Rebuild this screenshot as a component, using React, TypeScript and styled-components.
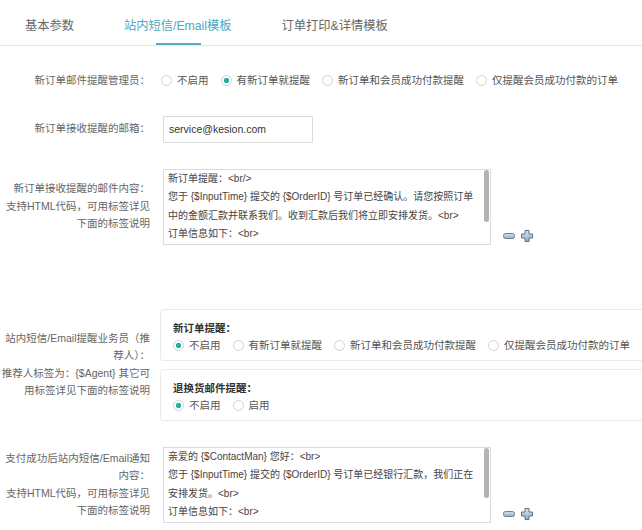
import styled, { createGlobalStyle } from 'styled-components';

const GlobalStyle = createGlobalStyle`
    html, body {
        margin: 0;
        padding: 0;
        background: #fff;
        overflow: hidden;
    }
    body {
        font-family: "Liberation Sans", "Noto Sans CJK SC", sans-serif;
        font-size: 10.5px;
        color: #666;
    }
`;

const StyledTabs = styled.div`
    display: flex;
    height: 45px;
    border-bottom: 1px solid #e6e6e6;
`;

const StyledTab = styled.div<{ $active?: boolean }>`
    position: relative;
    display: flex;
    align-items: center;
    padding: 4px 25px 0;
    font-size: 12.25px;
    color: ${(p) => (p.$active ? '#4ba6c1' : '#666')};
    &::after {
        content: '';
        display: ${(p) => (p.$active ? 'block' : 'none')};
        position: absolute;
        left: 50%;
        bottom: 0;
        width: 45px;
        height: 2px;
        margin-left: -22px;
        background: #5aacc6;
    }
`;

const StyledForm = styled.div`
    padding-top: 13px;
`;

const StyledRow = styled.div<{ $spaceAfter?: number }>`
    display: grid;
    grid-template-columns: 150px 1fr;
    column-gap: 10px;
    align-items: center;
    padding: 13px 0;
    margin-bottom: ${(p) => p.$spaceAfter || 0}px;
`;

const StyledLabel = styled.div`
    text-align: right;
    line-height: 17.5px;
    white-space: nowrap;
    color: #666;
`;

const StyledField = styled.div`
    display: flex;
    align-items: flex-end;
    min-width: 0;
`;

const StyledRadioGroup = styled.div<{ $indent?: number }>`
    display: flex;
    align-items: center;
    line-height: 17px;
    margin-left: ${(p) => p.$indent || 0}px;
    white-space: nowrap;
`;

const StyledRadioOption = styled.label`
    display: inline-flex;
    align-items: center;
    margin-right: 12px;
    color: #555;
`;

const StyledRadioCircle = styled.span<{ $checked?: boolean }>`
    display: inline-block;
    box-sizing: border-box;
    width: 11px;
    height: 11px;
    margin-right: 5px;
    border: 1px solid #d2d2d2;
    border-radius: 50%;
    background: ${(p) =>
        p.$checked ? 'radial-gradient(circle, #1fb3a2 0 2.4px, #fff 3px)' : '#fff'};
`;

const StyledInput = styled.div`
    box-sizing: border-box;
    width: 150px;
    height: 27px;
    margin-left: 3px;
    padding: 0 5px;
    border: 1px solid #dcdcdc;
    line-height: 25px;
    color: #333;
`;

const StyledTextBox = styled.div`
    position: relative;
    box-sizing: border-box;
    width: 328px;
    height: 76px;
    margin-left: 3px;
    padding: 0 5px 0 4px;
    border: 1px solid #dcdcdc;
    overflow: hidden;
    font-size: 10px;
    color: #444;
    line-height: 18.5px;
`;

const StyledTextLine = styled.div`
    white-space: nowrap;
`;

const StyledScrollThumb = styled.span<{ $height: number }>`
    position: absolute;
    top: 0;
    right: 1px;
    width: 5px;
    height: ${(p) => p.$height}px;
    border-radius: 3px;
    background: #b3b3b3;
`;

const StyledResizeIcons = styled.div`
    display: flex;
    align-items: center;
    gap: 6px;
    margin: 0 0 3px 12px;
`;

const StyledPanels = styled.div`
    display: flex;
    flex-direction: column;
    gap: 8px;
`;

const StyledPanel = styled.div`
    width: 520px;
    padding: 10px 12px 6px;
    border: 1px solid #ebebeb;
    border-radius: 3px;
`;

const StyledPanelTitle = styled.div`
    line-height: 17px;
    font-weight: bold;
    color: #333;
`;

type Option = { text: string };

const orderOptions: Option[] = [
    { text: '不启用' },
    { text: '有新订单就提醒' },
    { text: '新订单和会员成功付款提醒' },
    { text: '仅提醒会员成功付款的订单' },
];

const RadioGroup = ({ options, checked, indent }: { options: Option[]; checked: number; indent?: number }) => (
    <StyledRadioGroup $indent={indent}>
        {options.map((o, i) => (
            <StyledRadioOption key={o.text}>
                <StyledRadioCircle $checked={i === checked} />
                {o.text}
            </StyledRadioOption>
        ))}
    </StyledRadioGroup>
);

const ResizeIcons = () => (
    <StyledResizeIcons>
        <svg width="12" height="6" viewBox="0 0 12 6">
            <defs>
                <linearGradient id="mg" x1="0" y1="0" x2="0" y2="1">
                    <stop offset="0" stopColor="#d6e0ea" />
                    <stop offset="1" stopColor="#98abbf" />
                </linearGradient>
            </defs>
            <rect x="0.5" y="0.5" width="11" height="5" rx="2" fill="url(#mg)" stroke="#6b7f94" />
        </svg>
        <svg width="12" height="12" viewBox="0 0 12 12">
            <defs>
                <linearGradient id="pg" x1="0" y1="0" x2="0" y2="1">
                    <stop offset="0" stopColor="#dbe6f1" />
                    <stop offset="1" stopColor="#8fa8c2" />
                </linearGradient>
            </defs>
            <path
                d="M4 0.5H8V4H11.5V8H8V11.5H4V8H0.5V4H4Z"
                fill="url(#pg)"
                stroke="#5d738c"
                strokeLinejoin="round"
            />
        </svg>
    </StyledResizeIcons>
);

const TextBox = ({ lines, thumb }: { lines: string[]; thumb: number }) => (
    <StyledField>
        <StyledTextBox>
            {lines.map((l) => (
                <StyledTextLine key={l}>{l}</StyledTextLine>
            ))}
            <StyledScrollThumb $height={thumb} />
        </StyledTextBox>
        <ResizeIcons />
    </StyledField>
);

const App = () => {
    return (
        <>
            <GlobalStyle />
            <StyledTabs>
                <StyledTab>基本参数</StyledTab>
                <StyledTab $active>站内短信/Email模板</StyledTab>
                <StyledTab>订单打印&amp;详情模板</StyledTab>
            </StyledTabs>
            <StyledForm>
                <StyledRow>
                    <StyledLabel>新订单邮件提醒管理员：</StyledLabel>
                    <RadioGroup options={orderOptions} checked={1} indent={1} />
                </StyledRow>
                <StyledRow>
                    <StyledLabel>新订单接收提醒的邮箱：</StyledLabel>
                    <StyledField>
                        <StyledInput>service@kesion.com</StyledInput>
                    </StyledField>
                </StyledRow>
                <StyledRow $spaceAfter={38}>
                    <StyledLabel>
                        新订单接收提醒的邮件内容：
                        <br />
                        支持HTML代码，可用标签详见
                        <br />
                        下面的标签说明
                    </StyledLabel>
                    <TextBox
                        thumb={52}
                        lines={[
                            '新订单提醒：<br/>',
                            '您于 {$InputTime} 提交的 {$OrderID} 号订单已经确认。请您按照订单',
                            '中的金额汇款并联系我们。收到汇款后我们将立即安排发货。<br>',
                            '订单信息如下：<br>',
                        ]}
                    />
                </StyledRow>
                <StyledRow>
                    <StyledLabel>
                        站内短信/Email提醒业务员（推
                        <br />
                        荐人）：
                        <br />
                        推荐人标签为：{'{$Agent}'} 其它可
                        <br />
                        用标签详见下面的标签说明
                    </StyledLabel>
                    <StyledPanels>
                        <StyledPanel>
                            <StyledPanelTitle>新订单提醒：</StyledPanelTitle>
                            <RadioGroup options={orderOptions} checked={0} />
                        </StyledPanel>
                        <StyledPanel>
                            <StyledPanelTitle>退换货邮件提醒：</StyledPanelTitle>
                            <RadioGroup options={[{ text: '不启用' }, { text: '启用' }]} checked={0} />
                        </StyledPanel>
                    </StyledPanels>
                </StyledRow>
                <StyledRow>
                    <StyledLabel>
                        支付成功后站内短信/Email通知
                        <br />
                        内容：
                        <br />
                        支持HTML代码，可用标签详见
                        <br />
                        下面的标签说明
                    </StyledLabel>
                    <TextBox
                        thumb={50}
                        lines={[
                            '亲爱的 {$ContactMan} 您好：<br>',
                            '您于 {$InputTime} 提交的 {$OrderID} 号订单已经银行汇款，我们正在',
                            '安排发货。<br>',
                            '订单信息如下：<br>',
                        ]}
                    />
                </StyledRow>
            </StyledForm>
        </>
    );
};

export default App;
